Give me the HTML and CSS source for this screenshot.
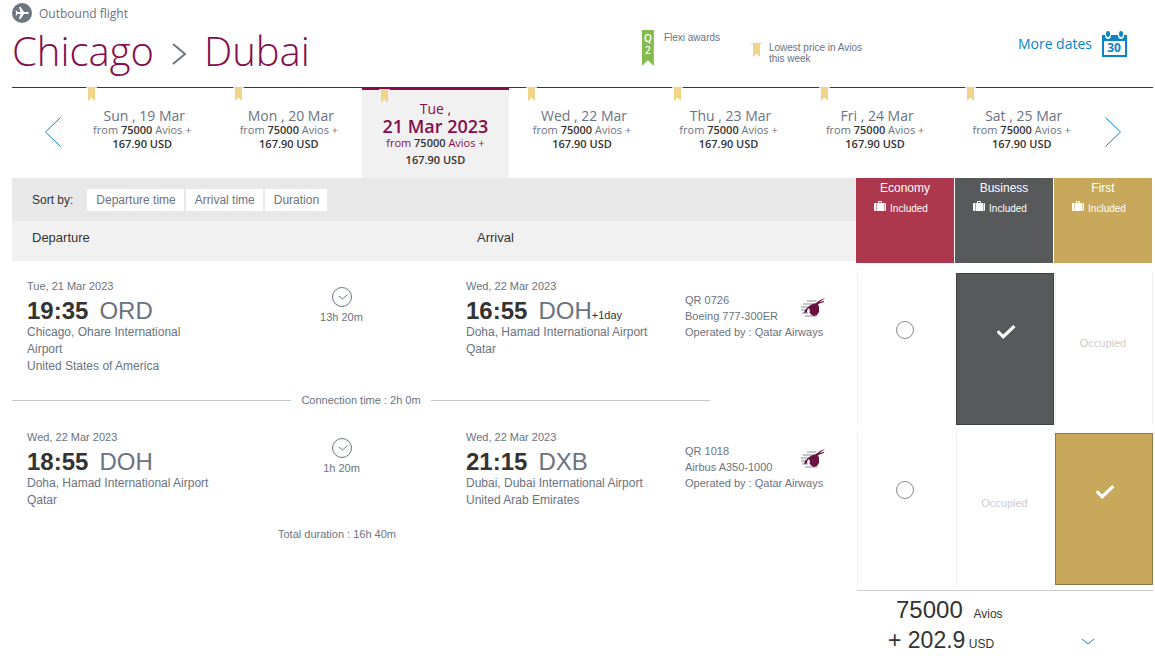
FILE: index.html
```html
<!DOCTYPE html>
<html lang="en">
<head>
  <meta charset="UTF-8">
  <meta name="viewport" content="width=device-width, initial-scale=1">
  <title>Outbound flight</title>
  <link rel="stylesheet" href="styles.css">
</head>
<body>

  <!-- shared shapes -->
  <svg class="sprite" aria-hidden="true">
    <symbol id="bookmark" viewBox="0 0 11 14">
      <path d="M0 0h11v1H9v13l-3.500-3.500L2 14V1H0z" fill="#f1d488"/>
    </symbol>
    <symbol id="clock" viewBox="0 0 20 20">
      <circle cx="10" cy="10" r="9.500" fill="none" stroke="#6d7580"/>
      <path d="M7 9l3.500 3L15.500 7.500" fill="none" stroke="#6d7580"/>
    </symbol>
    <symbol id="case" viewBox="0 0 12 11">
      <path d="M0 3q0-1 1-1h1v8H1q-1 0-1-1zM10.500 2H11q1 0 1 1v6q0 1-1 1h-.5zM2.500 2H4V1q0-1 1-1h2q1 0 1 1v1h2v8H2.500zM5 1v1h2V1z" fill="#fff" fill-rule="evenodd"/>
    </symbol>
    <symbol id="oryx" viewBox="0 0 24 20">
      <path d="M6 3h9M2 6h11M0 9h10M0 12h8M1 15h6M4 18h12" stroke="#c3c6ca" stroke-width="2"/>
      <path d="M3 15q1-4 4-6 3-3 8-4l4-3 5-2-1 1-5 3 5-1v1l-6 2 1 3v5l-2 3-3 1q-3-1-5-4z" fill="#6b1140"/>
      <path d="M6 14q0-3 2-4l1 3-1 2z" fill="#fff"/>
    </symbol>
  </svg>

  <header class="header">
    <div class="route">
      <p class="direction">
        <svg width="20" height="20" viewBox="0 0 20 20" aria-hidden="true">
          <circle cx="10" cy="10" r="10" fill="#6d7580"/>
          <path d="M17 10q0-1-2-1h-3L8.500 4H7l1.500 5H5.500L4.500 7.500H3.500L4.200 10l-.7 2.500h1L5.500 11h3L7 16h1.500L12 11h3q2 0 2-1z" fill="#fff"/>
        </svg>
        Outbound flight
      </p>
      <h1 class="cities">
        Chicago
        <svg class="to" width="14" height="22" viewBox="0 0 14 22" aria-label="to"><path d="M1 1l12 10L1 21" fill="none" stroke="#6d7580" stroke-width="2"/></svg>
        Dubai
      </h1>
    </div>
    <div class="legend">
      <span class="flexi-flag">Q<br>2</span>
      <span>Flexi awards</span>
    </div>
    <div class="legend legend-lowest">
      <svg width="11" height="14"><use href="#bookmark"/></svg>
      <span>Lowest price in Avios<br>this week</span>
    </div>
    <a class="more-dates" href="#">
      More dates
      <svg width="25" height="26" viewBox="0 0 25 26" aria-hidden="true">
        <path d="M0 4h25v22H0zM2 10v14h21V10z" fill="#0a85c7" fill-rule="evenodd"/>
        <ellipse cx="6" cy="4" rx="3" ry="4" fill="#fff"/>
        <ellipse cx="19" cy="4" rx="3" ry="4" fill="#fff"/>
        <ellipse cx="6" cy="3" rx="2" ry="3" fill="#0a85c7"/>
        <ellipse cx="19" cy="3" rx="2" ry="3" fill="#0a85c7"/>
        <text x="12" y="21" text-anchor="middle" class="calendar-day">30</text>
      </svg>
    </a>
  </header>

  <nav class="dates" aria-label="Departure date">
    <button class="arrow arrow-prev" aria-label="Previous week">
      <svg width="18" height="32" viewBox="0 0 18 32"><path d="M16.500 1.500L1.500 16l15 14.500"/></svg>
    </button>
    <a class="date" href="#">
      <svg class="mark" width="11" height="14"><use href="#bookmark"/></svg>
      <span class="day">Sun , 19 Mar</span>
      <span>from <b>75000</b> Avios +</span>
      <b>167.90 USD</b>
    </a>
    <a class="date" href="#">
      <svg class="mark" width="11" height="14"><use href="#bookmark"/></svg>
      <span class="day">Mon , 20 Mar</span>
      <span>from <b>75000</b> Avios +</span>
      <b>167.90 USD</b>
    </a>
    <a class="date selected" href="#" aria-current="date">
      <svg class="mark" width="11" height="14"><use href="#bookmark"/></svg>
      <span class="day">Tue ,</span>
      <strong class="full-day">21 Mar 2023</strong>
      <span>from <b>75000</b> Avios +</span>
      <b>167.90 USD</b>
    </a>
    <a class="date" href="#">
      <svg class="mark" width="11" height="14"><use href="#bookmark"/></svg>
      <span class="day">Wed , 22 Mar</span>
      <span>from <b>75000</b> Avios +</span>
      <b>167.90 USD</b>
    </a>
    <a class="date" href="#">
      <svg class="mark" width="11" height="14"><use href="#bookmark"/></svg>
      <span class="day">Thu , 23 Mar</span>
      <span>from <b>75000</b> Avios +</span>
      <b>167.90 USD</b>
    </a>
    <a class="date" href="#">
      <svg class="mark" width="11" height="14"><use href="#bookmark"/></svg>
      <span class="day">Fri , 24 Mar</span>
      <span>from <b>75000</b> Avios +</span>
      <b>167.90 USD</b>
    </a>
    <a class="date" href="#">
      <svg class="mark" width="11" height="14"><use href="#bookmark"/></svg>
      <span class="day">Sat , 25 Mar</span>
      <span>from <b>75000</b> Avios +</span>
      <b>167.90 USD</b>
    </a>
    <button class="arrow arrow-next" aria-label="Next week">
      <svg width="18" height="32" viewBox="0 0 18 32"><path d="M1.500 1.500l15 14.500-15 14.500"/></svg>
    </button>
  </nav>

  <main class="results">
    <section class="flights">
      <div class="sort">
        <span class="sort-label">Sort by:</span>
        <button>Departure time</button>
        <button>Arrival time</button>
        <button>Duration</button>
      </div>
      <div class="headings">
        <h2>Departure</h2>
        <h2>Arrival</h2>
      </div>

      <article class="segment">
        <div class="stop">
          <p class="stop-date">Tue, 21 Mar 2023</p>
          <p class="stop-time"><b>19:35</b><span class="code">ORD</span></p>
          <p>Chicago, Ohare International Airport</p>
          <p>United States of America</p>
        </div>
        <div class="duration">
          <svg width="20" height="20"><use href="#clock"/></svg>
          <span>13h 20m</span>
        </div>
        <div class="stop">
          <p class="stop-date">Wed, 22 Mar 2023</p>
          <p class="stop-time"><b>16:55</b><span class="code">DOH</span><span class="plus-day">+1day</span></p>
          <p>Doha, Hamad International Airport</p>
          <p>Qatar</p>
        </div>
        <div class="flight">
          <div class="aircraft">
            <p>QR 0726<br>Boeing 777-300ER</p>
            <svg width="24" height="20"><use href="#oryx"/></svg>
          </div>
          <p>Operated by : Qatar Airways</p>
        </div>
      </article>

      <p class="connection">Connection time : 2h 0m</p>

      <article class="segment">
        <div class="stop">
          <p class="stop-date">Wed, 22 Mar 2023</p>
          <p class="stop-time"><b>18:55</b><span class="code">DOH</span></p>
          <p>Doha, Hamad International Airport</p>
          <p>Qatar</p>
        </div>
        <div class="duration">
          <svg width="20" height="20"><use href="#clock"/></svg>
          <span>1h 20m</span>
        </div>
        <div class="stop">
          <p class="stop-date">Wed, 22 Mar 2023</p>
          <p class="stop-time"><b>21:15</b><span class="code">DXB</span></p>
          <p>Dubai, Dubai International Airport</p>
          <p>United Arab Emirates</p>
        </div>
        <div class="flight">
          <div class="aircraft">
            <p>QR 1018<br>Airbus A350-1000</p>
            <svg width="24" height="20"><use href="#oryx"/></svg>
          </div>
          <p>Operated by : Qatar Airways</p>
        </div>
      </article>

      <p class="total-duration">Total duration : 16h 40m</p>
    </section>

    <section class="cabins">
      <div class="cabin-heads">
        <div class="cabin economy">
          <h2>Economy</h2>
          <p><svg width="12" height="11"><use href="#case"/></svg>Included</p>
        </div>
        <div class="cabin business">
          <h2>Business</h2>
          <p><svg width="12" height="11"><use href="#case"/></svg>Included</p>
        </div>
        <div class="cabin first">
          <h2>First</h2>
          <p><svg width="12" height="11"><use href="#case"/></svg>Included</p>
        </div>
      </div>

      <div class="choices">
        <label class="choice"><input type="radio" name="leg1" aria-label="Economy"></label>
        <label class="choice business picked"><input type="radio" name="leg1" aria-label="Business" checked></label>
        <span class="choice occupied">Occupied</span>
      </div>
      <div class="choices">
        <label class="choice"><input type="radio" name="leg2" aria-label="Economy"></label>
        <span class="choice occupied">Occupied</span>
        <label class="choice first picked"><input type="radio" name="leg2" aria-label="First" checked></label>
      </div>

      <div class="price">
        <div>
          <p class="price-avios"><span class="amount">75000</span> Avios</p>
          <p class="price-cash"><span class="amount">+ 202.9</span> USD</p>
        </div>
        <button class="expand" aria-label="Show price details">
          <svg width="14" height="8" viewBox="0 0 14 8"><path d="M1 1l6 5 6-5"/></svg>
        </button>
      </div>
    </section>
  </main>

</body>
</html>
```
FILE: styles.css
```css
* {
  box-sizing: border-box;
}

body {
  margin: 0;
  padding: 0 2px 0 12px;
  background: #fff;
  color: #6a737f;
  font-family: "Liberation Sans", Arial, sans-serif;
  font-size: 12px;
}

h1, h2, p {
  margin: 0;
  font-weight: normal;
}

a {
  color: inherit;
  text-decoration: none;
}

button {
  border: 0;
  padding: 0;
  background: none;
  color: inherit;
  font: inherit;
  cursor: pointer;
}

svg {
  display: block;
  flex: none;
}

.sprite {
  position: absolute;
  width: 0;
  height: 0;
}

/* header */

.header {
  display: grid;
  grid-template-columns: 1fr 109px 267px auto;
  height: 87px;
  padding-right: 26px;
}

.direction {
  display: flex;
  align-items: center;
  gap: 7px;
  height: 20px;
  margin-top: 3px;
  font: 12px "Open Sans", sans-serif;
}

.cities {
  display: flex;
  align-items: center;
  gap: 18px;
  color: #850d4e;
  font: 300 40px/56px "Open Sans", sans-serif;
}

.to {
  margin-top: 6px;
}

.legend {
  display: flex;
  align-items: flex-start;
  gap: 10px;
  padding-top: 30px;
  font-size: 10px;
  line-height: 11px;
}

.legend span:last-child {
  padding-top: 2px;
}

.legend-lowest {
  gap: 7px;
  padding-top: 43px;
}

.legend-lowest span:last-child {
  padding-top: 0;
  margin-top: -1px;
}

.flexi-flag {
  width: 12px;
  height: 36px;
  padding-top: 2px;
  background: #85bb4e;
  clip-path: polygon(0 0, 100% 0, 100% 100%, 50% 84%, 0 100%);
  color: #fff;
  font: 600 10px/12px "Open Sans", sans-serif;
  text-align: center;
}

.more-dates {
  display: flex;
  align-items: center;
  gap: 10px;
  height: 87px;
  color: #0a85c7;
  font: 14px "Open Sans", sans-serif;
}

.calendar-day {
  fill: #0a85c7;
  font: bold 12px "Open Sans", sans-serif;
}

/* date strip */

.dates {
  display: grid;
  grid-template-columns: 57px repeat(7, 1fr) 58px;
  height: 91px;
  border-top: 1px solid #6f1a4e;
}

.arrow {
  display: flex;
  align-items: center;
  padding-bottom: 2px;
}

.arrow path,
.expand path {
  fill: none;
  stroke: #0a85c7;
}

.arrow-prev {
  justify-content: flex-end;
  padding-right: 7px;
}

.arrow-next {
  padding-left: 9px;
}

.date {
  position: relative;
  display: flex;
  flex-direction: column;
  align-items: center;
  padding-top: 21px;
  font: 11px/14px "Open Sans", sans-serif;
}

.date b {
  color: #333;
  font-weight: 600;
}

.day {
  padding-left: 4px;
  font-size: 14px;
}

.mark {
  position: absolute;
  top: -1px;
  left: 17px;
}

.selected {
  margin-top: -1px;
  padding-top: 12px;
  border-top: 3px solid #850d4e;
  background: #f1f1f1;
  color: #850d4e;
}

.selected .day {
  padding-left: 0;
}

.full-day {
  font-size: 18px;
  font-weight: 600;
  line-height: 20px;
}

.selected b:last-child {
  padding-top: 3px;
}

/* flights */

.results {
  display: grid;
  grid-template-columns: 1fr 297px;
}

.sort {
  display: flex;
  align-items: center;
  gap: 2px;
  height: 43px;
  padding-left: 20px;
  background: #e8e8e8;
}

.sort-label {
  margin-right: 12px;
  color: #333;
}

.sort button {
  height: 22px;
  padding: 0 8px 0 9px;
  background: #fff;
}

.headings {
  display: grid;
  grid-template-columns: 445px 1fr;
  height: 40px;
  padding: 9px 0 0 20px;
  background: #f1f1f1;
}

.headings h2 {
  color: #333;
  font-size: 13px;
  line-height: 16px;
}

.segment {
  display: grid;
  grid-template-columns: 188px 1fr 219px 171px;
  padding: 17px 0 0 15px;
  line-height: 17px;
}

.stop-date {
  font-size: 11px;
  line-height: 16px;
}

.stop-time {
  height: 26px;
  margin-top: 4px;
  font-size: 24px;
  line-height: 26px;
}

.stop-time b {
  margin-right: 11px;
  color: #333;
}

.plus-day {
  color: #333;
  font-size: 11px;
}

.duration {
  display: flex;
  flex-direction: column;
  align-items: center;
  gap: 2px;
  padding: 9px 0 0 2px;
  font-size: 11px;
  line-height: 16px;
}

.flight {
  width: 140px;
  padding-top: 14px;
  font-size: 11px;
  line-height: 16px;
  white-space: nowrap;
}

.aircraft {
  display: flex;
  justify-content: space-between;
  align-items: center;
}

.connection {
  display: flex;
  align-items: center;
  gap: 10px;
  margin: 17px 146px 4px 0;
  font-size: 11px;
  line-height: 16px;
}

.connection::before,
.connection::after {
  content: "";
  flex: 1;
  height: 1px;
  background: #c4c6c9;
}

.total-duration {
  margin: 17px 194px 0 0;
  font-size: 11px;
  line-height: 16px;
  text-align: center;
}

/* cabins */

.cabin-heads,
.choices {
  display: grid;
  grid-template-columns: repeat(3, 1fr);
  gap: 1px;
}

.cabin-heads {
  height: 85px;
  padding-right: 1px;
  margin-bottom: 10px;
}

.cabin {
  padding-top: 2px;
  color: #fff;
  text-align: center;
}

.cabin h2 {
  font-size: 12px;
  line-height: 16px;
}

.cabin p {
  display: flex;
  justify-content: center;
  align-items: flex-end;
  gap: 4px;
  padding: 5px 8px 0 0;
  font-size: 10px;
  line-height: 11px;
}

.cabin svg {
  margin-bottom: 2px;
}

.economy {
  background: #ad384d;
}

.business {
  background: #58595b;
}

.first {
  background: #c8a95b;
}

.choices {
  height: 152px;
  margin-bottom: 8px;
  padding-left: 1px;
}

.choice {
  display: flex;
  justify-content: center;
  padding-top: 48px;
  border: solid #eee;
  border-width: 0 0 0 1px;
}

.choice:last-child {
  border-right-width: 1px;
}

.choice input {
  appearance: none;
  width: 18px;
  height: 18px;
  margin: 0 4px 0 0;
  border: 1px solid #8b8b8b;
  border-radius: 50%;
}

.picked {
  border: 1px solid #3f4042;
}

.first.picked {
  border-color: #8f7748;
}

.picked input {
  width: 19px;
  height: 14px;
  margin: 3px 0 0 2px;
  border: 0;
  border-radius: 0;
  background: #fff;
  clip-path: polygon(0 52%, 12% 38%, 35% 68%, 88% 0, 100% 16%, 35% 100%);
}

.occupied {
  padding: 62px 2px 0 0;
  color: #ccc;
  font-size: 11px;
  line-height: 16px;
}

.price {
  display: grid;
  grid-template-columns: 1fr 72px;
  margin: -3px 0 0 1px;
  padding-top: 4px;
  border-top: 1px solid #c9cbcd;
  color: #333;
}

.price p {
  height: 30px;
  line-height: 30px;
}

.price-avios {
  padding-left: 39px;
}

.price-cash {
  padding-left: 31px;
}

.amount {
  font-size: 24px;
}

.price-avios .amount {
  margin-right: 8px;
}

.price-cash .amount {
  font-size: 23px;
}

.expand {
  align-self: end;
  justify-self: start;
  padding-bottom: 9px;
}
```
